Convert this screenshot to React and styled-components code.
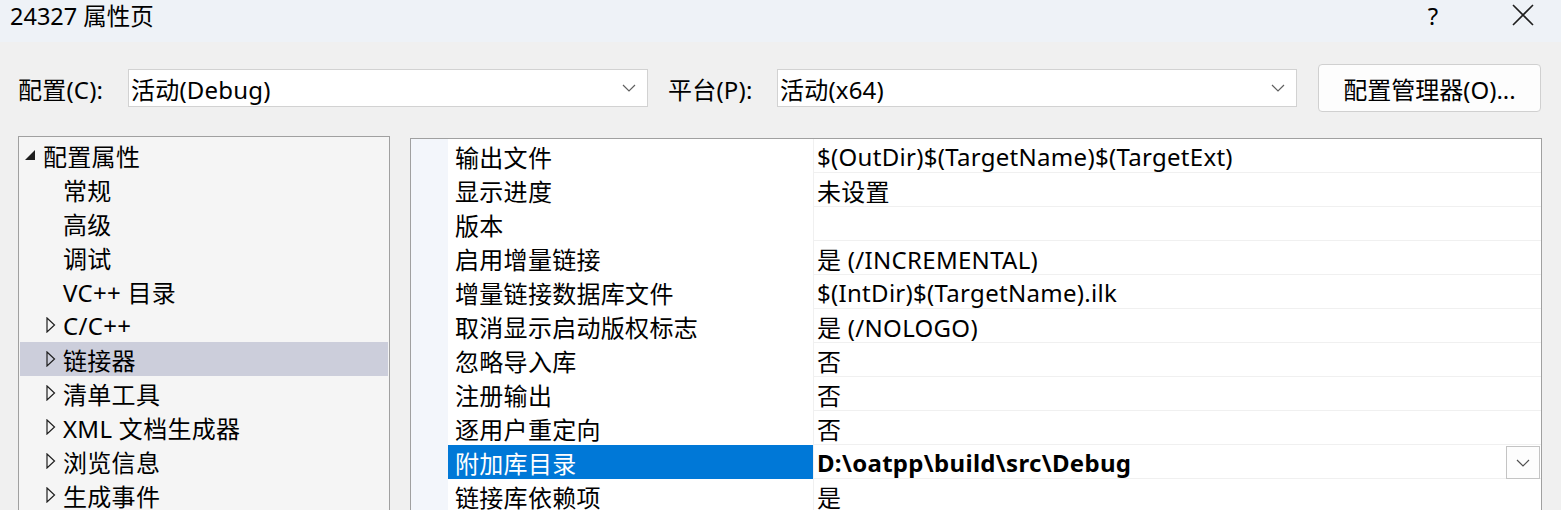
import React from "react";
import styled, { createGlobalStyle } from "styled-components";

const GlobalStyle = createGlobalStyle`
  html, body {
    margin: 0;
    padding: 0;
    background: #f0f0f0;
  }
  body {
    font-family: "Noto Sans", "Noto Sans CJK SC", sans-serif;
    color: #000;
  }
`;

const Window = styled.div`
  width: 1561px;
  height: 510px;
  overflow: hidden;
  display: flex;
  flex-direction: column;
  background: #f0f0f0;
`;

const TitleBar = styled.div`
  height: 42px;
  flex: none;
  display: flex;
  align-items: center;
  background: #eef2f7;
  padding-left: 10px;
`;

const Title = styled.div`
  flex: 1;
  font-size: 23.5px;
  line-height: 1;
  margin-top: -8px;
`;

const TitleButton = styled.div`
  width: ${({ $w }) => $w}px;
  margin-right: ${({ $mr = 0 }) => $mr}px;
  height: 42px;
  display: flex;
  align-items: center;
  justify-content: center;
  font-size: 24px;
  margin-top: -12px;
`;

const ConfigRow = styled.div`
  display: flex;
  align-items: center;
  height: 48px;
  margin-top: 22px;
  padding-left: 18px;
  font-size: 24px;
  letter-spacing: 0.2px;
`;

const FieldLabel = styled.div`
  width: ${({ $w }) => $w}px;
  flex: none;
`;

const Combo = styled.div`
  width: 520px;
  height: 38px;
  box-sizing: border-box;
  border: 1px solid #d2d2d2;
  background: #fff;
  display: flex;
  align-items: center;
  padding-left: 2px;
  margin-right: ${({ $mr }) => $mr}px;
  flex: none;
`;

const ComboText = styled.span`
  flex: 1;
`;

const ComboArrow = styled.span`
  width: 36px;
  display: flex;
  justify-content: center;
  color: #606060;
`;

const ManagerButton = styled.div`
  width: 223px;
  height: 48px;
  box-sizing: border-box;
  border: 1px solid #d0d0d0;
  border-radius: 4px;
  background: #fdfdfd;
  display: flex;
  align-items: center;
  justify-content: center;
  margin-left: 21px;
  letter-spacing: 0;
`;

const Main = styled.div`
  display: flex;
  gap: 20px;
  margin-top: 24px;
  padding-left: 18px;
  flex: 1;
  min-height: 0;
  font-size: 24px;
  letter-spacing: 0.3px;
`;

const TreePanel = styled.div`
  width: 372px;
  flex: none;
  box-sizing: border-box;
  border: 1px solid #a0a0a0;
  border-bottom: none;
  background: #f5f5f5;
  padding: 1px;
`;

const TreeRow = styled.div`
  height: 34px;
  display: flex;
  align-items: center;
  padding-left: ${({ $indent }) => $indent}px;
  background: ${({ $selected }) => ($selected ? "#cccedb" : "transparent")};
  white-space: pre;
`;

const Toggle = styled.span`
  width: ${({ $w }) => $w}px;
  flex: none;
  display: flex;
  align-items: center;
`;

const GridPanel = styled.div`
  width: 1132px;
  flex: none;
  margin-top: 2px;
  box-sizing: border-box;
  border: 1px solid #a0a0a0;
  border-bottom: none;
  background: #fff;
  display: flex;
`;

const Gutter = styled.div`
  width: 37px;
  flex: none;
  background: #f3f6fb;
`;

const Table = styled.div`
  flex: 1;
`;

const PropRow = styled.div`
  display: grid;
  grid-template-columns: 366px 1fr;
  height: 34px;
  box-sizing: border-box;
  border-bottom: 1px solid #f0f0f0;
`;

const NameCell = styled.div`
  display: flex;
  align-items: center;
  padding-left: 7px;
  border-right: 1px solid #f0f0f0;
  background: ${({ $selected }) => ($selected ? "#0078d7" : "#fff")};
  color: ${({ $selected }) => ($selected ? "#fff" : "#000")};
`;

const ValueCell = styled.div`
  display: flex;
  align-items: center;
  padding-left: 3px;
  font-weight: ${({ $bold }) => ($bold ? 700 : 400)};
  white-space: pre;
`;

const ValueText = styled.span`
  flex: 1;
`;

const DropButton = styled.div`
  width: 34px;
  height: 33px;
  box-sizing: border-box;
  border: 1px solid #c4c4c4;
  background: #fdfdfd;
  display: flex;
  align-items: center;
  justify-content: center;
  margin-right: 1px;
  color: #505050;
`;

const Chevron = () => (
  <svg width="14" height="8" viewBox="0 0 14 8">
    <path d="M1 1 L7 7 L13 1" fill="none" stroke="currentColor" strokeWidth="1.2" />
  </svg>
);

const Expanded = () => (
  <svg width="11" height="11" viewBox="0 0 11 11">
    <polygon points="10,0 10,10 0,10" fill="#1e1e1e" />
  </svg>
);

const Collapsed = () => (
  <svg width="10" height="16" viewBox="0 0 10 16">
    <polygon points="1,1 8.5,8 1,15" fill="none" stroke="#1e1e1e" strokeWidth="1.2" />
  </svg>
);

const CloseIcon = () => (
  <svg width="22" height="22" viewBox="0 0 22 22">
    <path d="M1 1 L21 21 M21 1 L1 21" stroke="#1e1e1e" strokeWidth="1.6" />
  </svg>
);

const tree = [
  { label: "配置属性", level: 0, state: "open" },
  { label: "常规", level: 1 },
  { label: "高级", level: 1 },
  { label: "调试", level: 1 },
  { label: "VC++ 目录", level: 1 },
  { label: "C/C++", level: 1, state: "closed" },
  { label: "链接器", level: 1, state: "closed", selected: true },
  { label: "清单工具", level: 1, state: "closed" },
  { label: "XML 文档生成器", level: 1, state: "closed" },
  { label: "浏览信息", level: 1, state: "closed" },
  { label: "生成事件", level: 1, state: "closed" },
];

const props = [
  ["输出文件", "$(OutDir)$(TargetName)$(TargetExt)"],
  ["显示进度", "未设置"],
  ["版本", ""],
  ["启用增量链接", "是 (/INCREMENTAL)"],
  ["增量链接数据库文件", "$(IntDir)$(TargetName).ilk"],
  ["取消显示启动版权标志", "是 (/NOLOGO)"],
  ["忽略导入库", "否"],
  ["注册输出", "否"],
  ["逐用户重定向", "否"],
  ["附加库目录", "D:\\oatpp\\build\\src\\Debug", true],
  ["链接库依赖项", "是"],
];

export default function App() {
  return (
    <Window>
      <GlobalStyle />
      <TitleBar>
        <Title>24327 属性页</Title>
        <TitleButton $w={90} $mr={7}>?</TitleButton>
        <TitleButton $w={76}>
          <CloseIcon />
        </TitleButton>
      </TitleBar>

      <ConfigRow>
        <FieldLabel $w={110}>配置(C):</FieldLabel>
        <Combo $mr={20}>
          <ComboText>活动(Debug)</ComboText>
          <ComboArrow>
            <Chevron />
          </ComboArrow>
        </Combo>
        <FieldLabel $w={109}>平台(P):</FieldLabel>
        <Combo $mr={0}>
          <ComboText>活动(x64)</ComboText>
          <ComboArrow>
            <Chevron />
          </ComboArrow>
        </Combo>
        <ManagerButton>配置管理器(O)...</ManagerButton>
      </ConfigRow>

      <Main>
        <TreePanel>
          {tree.map((item) => (
            <TreeRow
              key={item.label}
              $indent={item.level === 0 ? 5 : 26}
              $selected={item.selected}
            >
              <Toggle $w={item.level === 0 ? 18 : 17}>
                {item.state === "open" && <Expanded />}
                {item.state === "closed" && <Collapsed />}
              </Toggle>
              {item.label}
            </TreeRow>
          ))}
        </TreePanel>

        <GridPanel>
          <Gutter />
          <Table>
            {props.map(([name, value, selected]) => (
              <PropRow key={name}>
                <NameCell $selected={selected}>{name}</NameCell>
                <ValueCell $bold={selected}>
                  <ValueText>{value}</ValueText>
                  {selected && (
                    <DropButton>
                      <Chevron />
                    </DropButton>
                  )}
                </ValueCell>
              </PropRow>
            ))}
          </Table>
        </GridPanel>
      </Main>
    </Window>
  );
}
